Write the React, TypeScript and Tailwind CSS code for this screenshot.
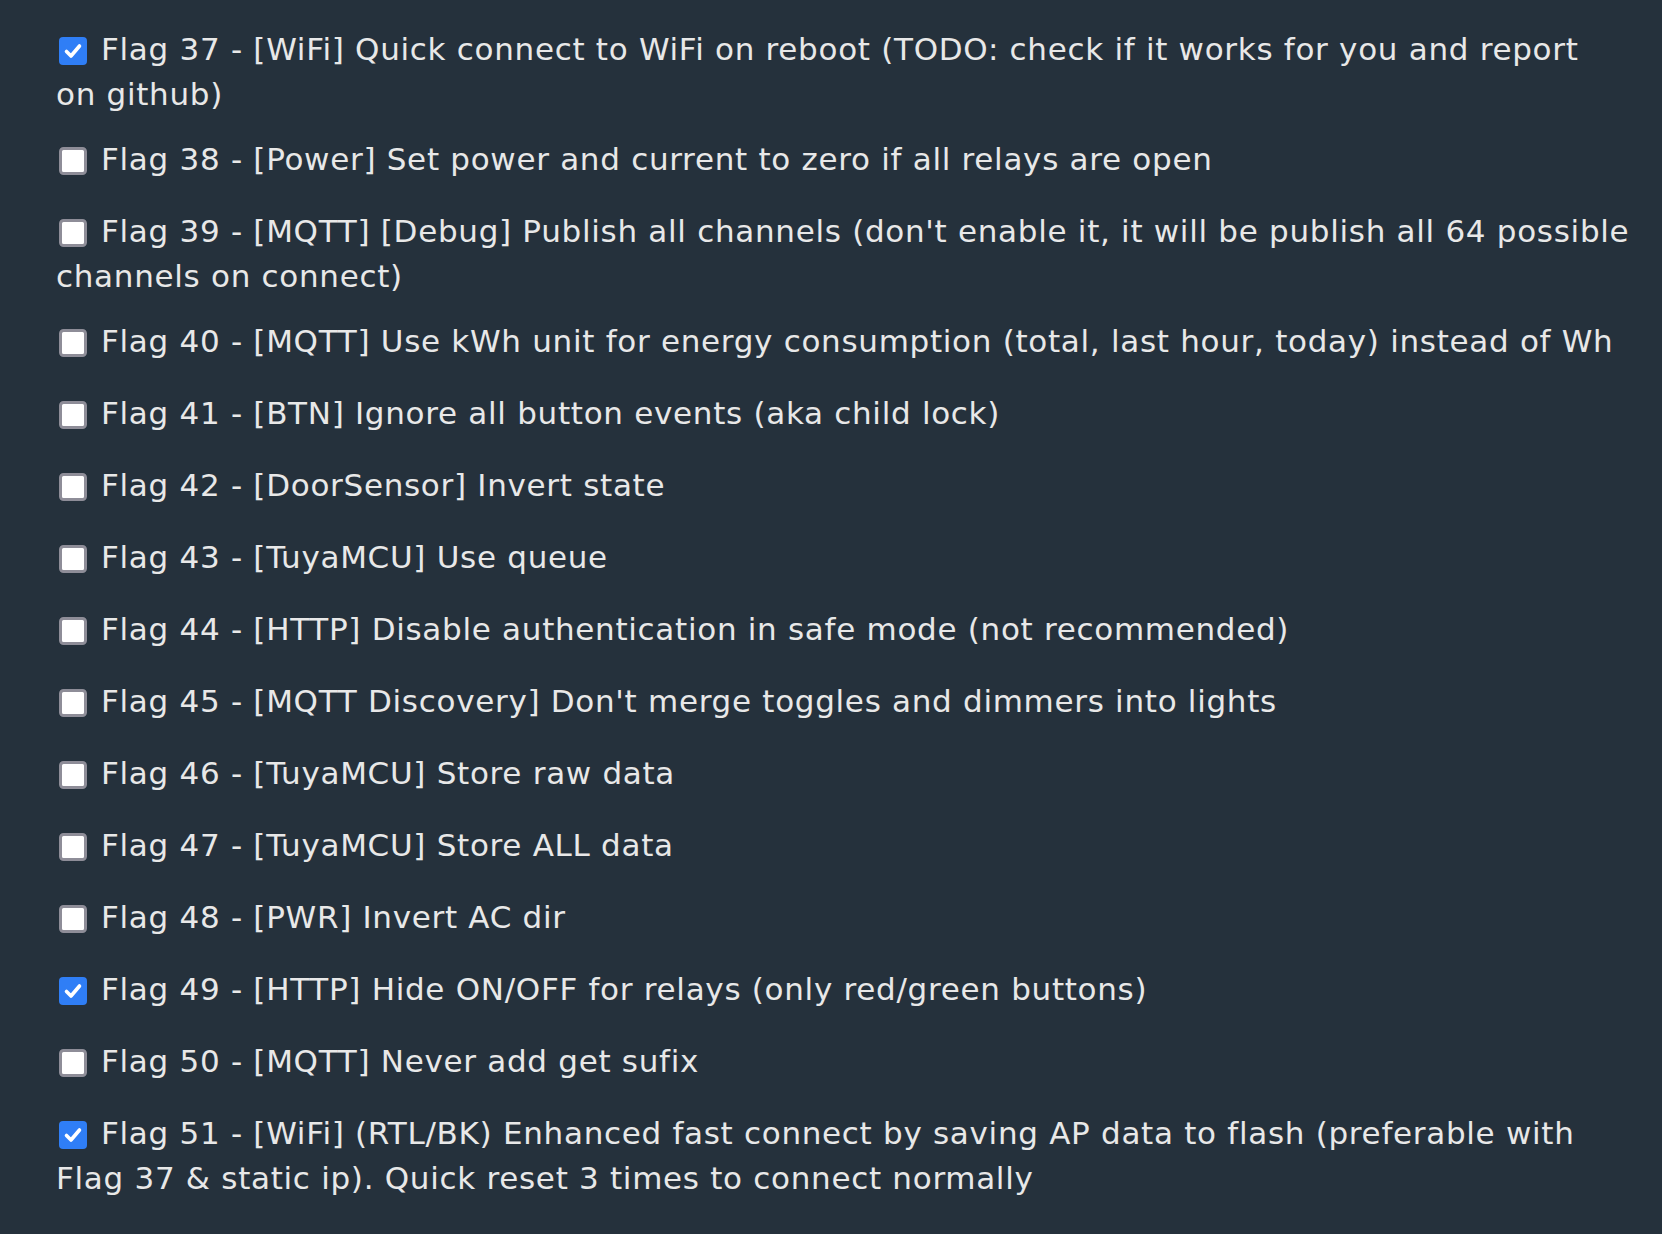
import { Fragment } from 'react';

const flags = [
  { id: 37, checked: true, text: '[WiFi] Quick connect to WiFi on reboot (TODO: check if it works for you and report\non github)' },
  { id: 38, checked: false, text: '[Power] Set power and current to zero if all relays are open' },
  { id: 39, checked: false, text: "[MQTT] [Debug] Publish all channels (don't enable it, it will be publish all 64 possible channels on connect)" },
  { id: 40, checked: false, text: '[MQTT] Use kWh unit for energy consumption (total, last hour, today) instead of Wh' },
  { id: 41, checked: false, text: '[BTN] Ignore all button events (aka child lock)' },
  { id: 42, checked: false, text: '[DoorSensor] Invert state' },
  { id: 43, checked: false, text: '[TuyaMCU] Use queue' },
  { id: 44, checked: false, text: '[HTTP] Disable authentication in safe mode (not recommended)' },
  { id: 45, checked: false, text: "[MQTT Discovery] Don't merge toggles and dimmers into lights" },
  { id: 46, checked: false, text: '[TuyaMCU] Store raw data' },
  { id: 47, checked: false, text: '[TuyaMCU] Store ALL data' },
  { id: 48, checked: false, text: '[PWR] Invert AC dir' },
  { id: 49, checked: true, text: '[HTTP] Hide ON/OFF for relays (only red/green buttons)' },
  { id: 50, checked: false, text: '[MQTT] Never add get sufix' },
  { id: 51, checked: true, text: '[WiFi] (RTL/BK) Enhanced fast connect by saving AP data to flash (preferable with Flag 37 & static ip). Quick reset 3 times to connect normally' },
];

// svg is replaced content: its baseline is the bottom margin edge
const Box = ({ checked }: { checked: boolean }) => (
  <svg width="28" height="28" viewBox="0 0 28 28" className="mb-[10px] ml-[3px] mr-[14px] inline-block align-[-15px]">
    {checked ? (
      <>
        <rect x="0" y="0" width="28" height="28" rx="4" fill="#2f7ef6" />
        <path d="M7.5 14.5 L12 19 L20.5 9" fill="none" stroke="white" strokeWidth="3.6" strokeLinecap="round" strokeLinejoin="round" />
      </>
    ) : (
      <rect x="1.5" y="1.5" width="25" height="25" rx="3" fill="white" stroke="#8e8d98" strokeWidth="3" />
    )}
  </svg>
);

export default function App() {
  return (
    <main className="min-h-screen w-full bg-[#25313c] pb-8 pl-[56px] pr-[30px] pt-[30px] font-['DejaVu_Sans',Verdana,sans-serif] text-[31px] leading-[38px] tracking-[0.7px] text-[#e8e8e8]">
      {flags.map((f) => (
        <div key={f.id} className="mb-[27px]">
          <label>
            <Box checked={f.checked} />
            Flag {f.id} -{' '}
            {f.text.split('\n').map((part, i) => (
              <Fragment key={i}>
                {i > 0 && <br />}
                {part}
              </Fragment>
            ))}
          </label>
        </div>
      ))}
    </main>
  );
}
